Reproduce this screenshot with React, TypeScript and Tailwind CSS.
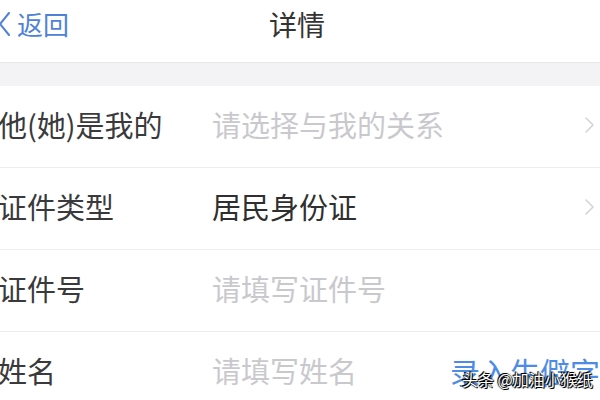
import React from 'react'

const font = { fontFamily: '"Noto Sans CJK SC", "Noto Sans", sans-serif' }

function Chevron() {
  return (
    <svg width="12" height="18" viewBox="0 0 12 18" className="shrink-0">
      <path d="M2 2 L9 9 L2 16" fill="none" stroke="#d4d4d8" strokeWidth="1.6" strokeLinecap="round" strokeLinejoin="round" />
    </svg>
  )
}

function Row({ label, value, placeholder, arrow, action, last }: {
  label: string; value?: string; placeholder?: string; arrow?: boolean; action?: string; last?: boolean
}) {
  return (
    <div className={`flex items-center h-[82px] pb-[4px] ${last ? '' : 'border-b border-[#ededef]'}`}>
      <div className="w-[214px] shrink-0 text-[29px] text-[#3a3a3c] -ml-[2px] whitespace-nowrap">{label}</div>
      <div className={`flex-1 text-[29px] whitespace-nowrap ${value ? 'text-[#2f2f2f]' : 'text-[#c9c9cd]'}`}>{value ?? placeholder}</div>
      {arrow && <div className="pr-[4px]"><Chevron /></div>}
      {action && <div className="text-[30px] text-[#4d8ce6] whitespace-nowrap">{action}</div>}
    </div>
  )
}

export default function App() {
  return (
    <div className="w-[600px] h-[400px] overflow-hidden bg-white relative" style={font}>
      {/* header */}
      <div className="h-[63px] flex items-start pt-[4px] relative border-b border-[#e9e9ec]">
        <div className="flex items-center text-[#4f82d6]">
          <svg width="14" height="28" viewBox="0 0 14 28" className="-ml-[2px]">
            <path d="M11 3 L2 14 L11 25" fill="none" stroke="#4f82d6" strokeWidth="2" strokeLinecap="round" strokeLinejoin="round" />
          </svg>
          <span className="text-[26px] ml-[5px] leading-[40px]">返回</span>
        </div>
        <div className="absolute left-0 right-0 top-[4px] text-center text-[28px] text-[#333] leading-[40px] pr-[6px]">详情</div>
      </div>
      <div className="h-[23px] bg-[#f3f3f6]" />
      <div className="bg-white">
        <Row label="他(她)是我的" placeholder="请选择与我的关系" arrow />
        <Row label="证件类型" value="居民身份证" arrow />
        <Row label="证件号" placeholder="请填写证件号" />
        <Row label="姓名" placeholder="请填写姓名" action="录入生僻字" last />
      </div>
      <div
        className="absolute left-[462px] top-[371px] text-[16px] text-white leading-none whitespace-nowrap"
        style={{ textShadow: '0 0 2px #000, 0 0 1px #000, 1px 1px 0 #000, -1px -1px 0 #000' }}
      >
        头条 @加油小猴纸
      </div>
    </div>
  )
}
